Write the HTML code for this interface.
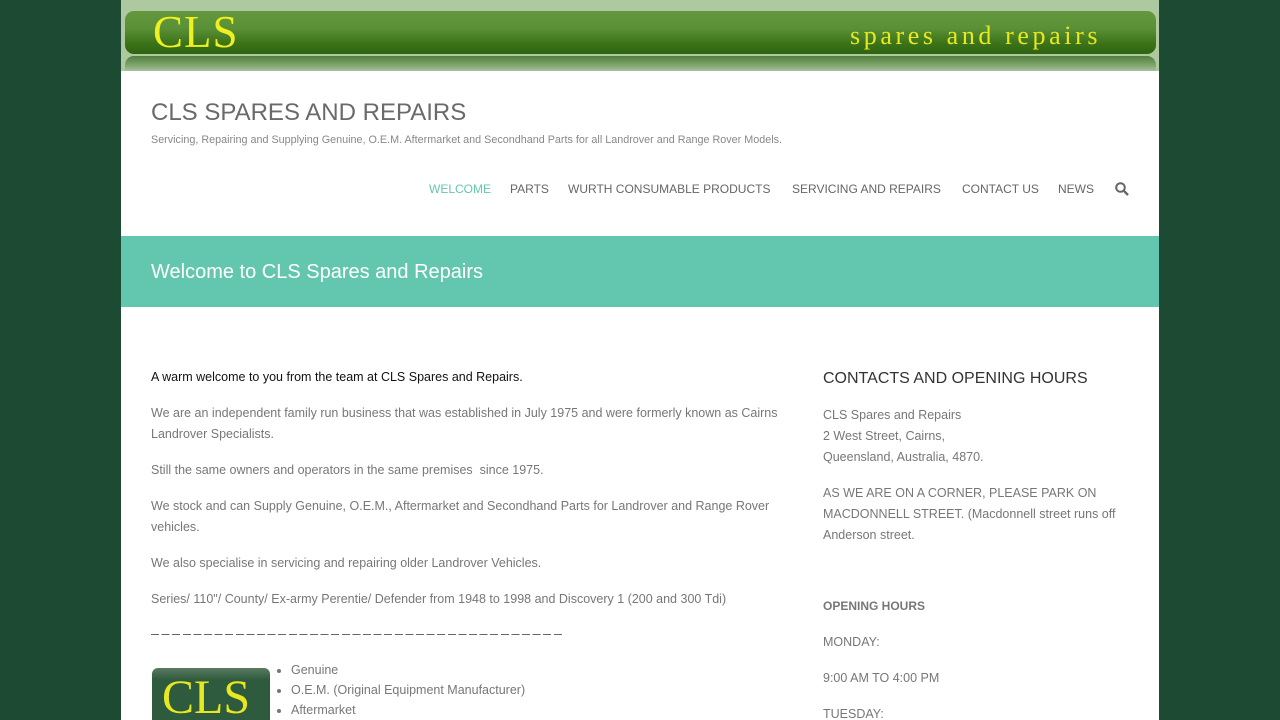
<!DOCTYPE html>
<html><head><meta charset="utf-8"><style>
*{margin:0;padding:0;box-sizing:border-box}
html,body{overflow:hidden}
body{background:#1d4a33;font-family:"Liberation Sans",sans-serif;width:1280px;height:720px}
.wrap{position:absolute;left:121px;top:0;width:1038px;height:720px;background:#fff;overflow:hidden}
.banner{position:absolute;left:0;top:0;width:1038px;height:71px;background:#aec8a0}
.bar{position:absolute;left:4px;top:11px;width:1031px;height:43px;border-radius:9px;background:linear-gradient(#64983e,#5a9036 40%,#3c7218 75%,#2e6410)}
.bar2{position:absolute;left:4px;top:56px;width:1031px;height:15px;border-radius:9px 9px 0 0;background:linear-gradient(#4f7f3a,#88aa78 70%,#a8c29a)}
.cls{position:absolute;left:32px;top:6px;font-family:"Liberation Serif",serif;font-size:45px;color:#f0f020;letter-spacing:1px}
.sr{position:absolute;left:729px;top:21px;font-family:"Liberation Serif",serif;font-size:26px;color:#e8e820;letter-spacing:3.6px}
h1{position:absolute;left:30px;top:99px;font-weight:normal;font-size:24px;color:#6a6a6a}
.tag{position:absolute;left:30px;top:134px;font-size:11px;color:#888;transform:scaleX(0.98);transform-origin:left}
.nav{position:absolute;top:182px;font-size:12px;color:#666}
.hero{position:absolute;left:0;top:236px;width:1038px;height:71px;background:#63c7b0}
.hero h2{position:absolute;left:30px;top:25px;font-weight:normal;font-size:20px;color:#fff}
.c{position:absolute;font-size:12.5px;color:#777;line-height:21px}
.side h3{font-weight:normal;font-size:16px;color:#333}
</style></head><body>
<div class="wrap">
<div class="banner"><div class="bar"></div><div class="bar2"></div><div class="cls">CLS</div><div class="sr">spares and repairs</div></div>
<h1>CLS SPARES AND REPAIRS</h1>
<div class="tag">Servicing, Repairing and Supplying Genuine, O.E.M. Aftermarket and Secondhand Parts for all Landrover and Range Rover Models.</div>
<div class="nav" style="left:308px;color:#63c7b0">WELCOME</div>
<div class="nav" style="left:389px">PARTS</div>
<div class="nav" style="left:447px">WURTH CONSUMABLE PRODUCTS</div>
<div class="nav" style="left:671px">SERVICING AND REPAIRS</div>
<div class="nav" style="left:841px">CONTACT US</div>
<div class="nav" style="left:937px">NEWS</div>
<svg style="position:absolute;left:994px;top:182px" width="14" height="14" viewBox="0 0 14 14"><circle cx="5.5" cy="5.5" r="4.3" fill="none" stroke="#666" stroke-width="2"/><path d="M8.7 8.7L13 13" stroke="#666" stroke-width="2.4"/></svg>
<div class="hero"><h2>Welcome to CLS Spares and Repairs</h2></div>
<div class="c" style="left:30px;top:367px;width:640px">
<p style="color:#111;margin-bottom:15px">A warm welcome to you from the team at CLS Spares and Repairs.</p>
<p style="margin-bottom:15px">We are an independent family run business that was established in July 1975 and were formerly known as Cairns Landrover Specialists.</p>
<p style="margin-bottom:15px">Still the same owners and operators in the same premises&nbsp; since 1975.</p>
<p style="margin-bottom:15px">We stock and can Supply Genuine, O.E.M., Aftermarket and Secondhand Parts for Landrover and Range Rover vehicles.</p>
<p style="margin-bottom:15px">We also specialise in servicing and repairing older Landrover Vehicles.</p>
<p style="margin-bottom:15px">Series/ 110"/ County/ Ex-army Perentie/ Defender from 1948 to 1998 and Discovery 1 (200 and 300 Tdi)</p>
</div>
<div style="position:absolute;left:30px;top:634px;width:413px;height:1px;background:repeating-linear-gradient(90deg,#666 0 8px,transparent 8px 10.6px)"></div>
<div style="position:absolute;left:31px;top:668px;width:118px;height:60px;border-radius:6px;background:linear-gradient(#5a7a60,#2e5a3e 20%);font-family:'Liberation Serif',serif;font-size:48px;color:#e8e820;padding:2px 0 0 10px">CLS</div>
<ul class="c" style="left:170px;top:660px;padding-left:0;line-height:20px"><li>Genuine</li><li>O.E.M. (Original Equipment Manufacturer)</li><li>Aftermarket</li></ul>
<div class="c side" style="left:702px;top:368px;width:300px">
<h3 style="margin-bottom:16px">CONTACTS AND OPENING HOURS</h3>
<p style="margin-bottom:15px">CLS Spares and Repairs<br>2 West Street, Cairns,<br>Queensland, Australia, 4870.</p>
<p style="margin-bottom:50px">AS WE ARE ON A CORNER, PLEASE PARK ON MACDONNELL STREET. (Macdonnell street runs off Anderson street.</p>
<p style="margin-bottom:15px;font-weight:bold;font-size:12px">OPENING HOURS</p>
<p style="margin-bottom:15px">MONDAY:</p>
<p style="margin-bottom:15px">9:00 AM TO 4:00 PM</p>
<p>TUESDAY:</p>
</div>
</div>
</body></html>
